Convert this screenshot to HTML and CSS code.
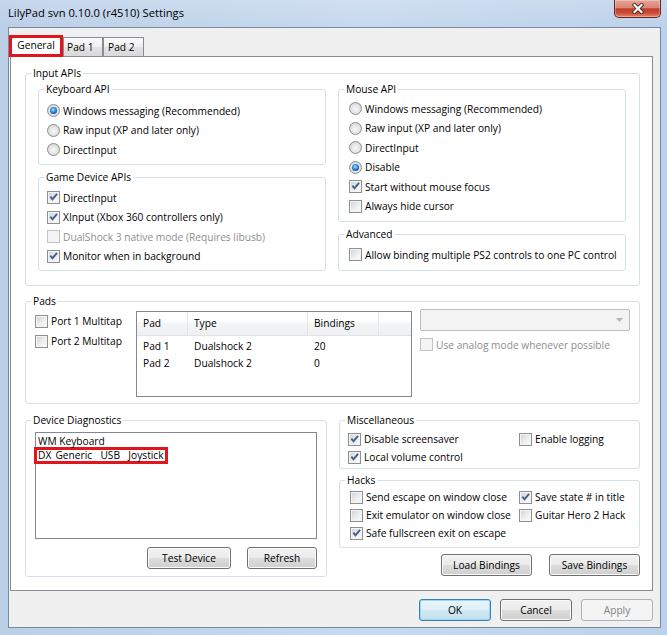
FILE: index.html
```html
<!DOCTYPE html>
<html lang="en">
<head>
    <meta charset="UTF-8">
    <meta name="viewport" content="width=device-width, initial-scale=1.0">
    <title>LilyPad svn 0.10.0 (r4510) Settings</title>
    <link rel="stylesheet" href="styles.css">
</head>
<body>
    <div class="window">
        <div class="titlebar">
            <span class="title">LilyPad svn 0.10.0 (r4510) Settings</span>
            <div class="close-button">
                <svg width="12" height="11" viewBox="0 0 12 11">
                    <path d="M2.5 2 L9.5 9 M9.5 2 L2.5 9" stroke="#4a2a25" stroke-width="4" stroke-linecap="square" fill="none"/>
                    <path d="M2.5 2 L9.5 9 M9.5 2 L2.5 9" stroke="#fff" stroke-width="2.2" stroke-linecap="square" fill="none"/>
                </svg>
            </div>
        </div>

        <div class="client">
            <!-- Tab strip -->
            <div class="tabs">
                <div class="tab selected">General</div>
                <div class="tab pad1">Pad 1</div>
                <div class="tab pad2">Pad 2</div>
            </div>

            <div class="tab-page">
                <!-- Input APIs -->
                <fieldset class="group input-apis">
                    <legend>Input APIs</legend>
                    <div class="input-body">
                        <div class="api-col">
                            <fieldset class="group keyboard">
                                <legend>Keyboard API</legend>
                                <div class="options left-opts pt5">
                                    <div class="option"><span class="radio on"></span>Windows messaging (Recommended)</div>
                                    <div class="option"><span class="radio"></span>Raw input (XP and later only)</div>
                                    <div class="option"><span class="radio"></span>DirectInput</div>
                                </div>
                            </fieldset>
                            <fieldset class="group game">
                                <legend>Game Device APIs</legend>
                                <div class="options left-opts pt4">
                                    <div class="option"><span class="check"><svg viewBox="0 0 11 11"><polygon points="1.6,5.2 3.1,4 4.4,5.7 8.4,1.2 9.8,2.5 4.5,8.8"/></svg></span>DirectInput</div>
                                    <div class="option"><span class="check"><svg viewBox="0 0 11 11"><polygon points="1.6,5.2 3.1,4 4.4,5.7 8.4,1.2 9.8,2.5 4.5,8.8"/></svg></span>XInput (Xbox 360 controllers only)</div>
                                    <div class="option disabled"><span class="check"></span>DualShock 3 native mode (Requires libusb)</div>
                                    <div class="option"><span class="check"><svg viewBox="0 0 11 11"><polygon points="1.6,5.2 3.1,4 4.4,5.7 8.4,1.2 9.8,2.5 4.5,8.8"/></svg></span>Monitor when in background</div>
                                </div>
                            </fieldset>
                        </div>
                        <div class="api-col">
                            <fieldset class="group mouse">
                                <legend>Mouse API</legend>
                                <div class="options right-opts pt3">
                                    <div class="option"><span class="radio"></span>Windows messaging (Recommended)</div>
                                    <div class="option"><span class="radio"></span>Raw input (XP and later only)</div>
                                    <div class="option"><span class="radio"></span>DirectInput</div>
                                    <div class="option"><span class="radio on"></span>Disable</div>
                                    <div class="option"><span class="check"><svg viewBox="0 0 11 11"><polygon points="1.6,5.2 3.1,4 4.4,5.7 8.4,1.2 9.8,2.5 4.5,8.8"/></svg></span>Start without mouse focus</div>
                                    <div class="option"><span class="check"></span>Always hide cursor</div>
                                </div>
                            </fieldset>
                            <fieldset class="group advanced">
                                <legend>Advanced</legend>
                                <div class="options right-opts pt4">
                                    <div class="option"><span class="check"></span>Allow binding multiple PS2 controls to one PC control</div>
                                </div>
                            </fieldset>
                        </div>
                    </div>
                </fieldset>

                <!-- Pads -->
                <fieldset class="group pads">
                    <legend>Pads</legend>
                    <div class="pads-body">
                        <div class="multitap">
                            <div class="option tall"><span class="check"></span>Port 1 Multitap</div>
                            <div class="option tall"><span class="check"></span>Port 2 Multitap</div>
                        </div>
                        <div class="listview">
                            <div class="lv-header">
                                <div class="lv-col c1">Pad</div>
                                <div class="lv-col c2">Type</div>
                                <div class="lv-col c3">Bindings</div>
                            </div>
                            <div class="lv-rows">
                                <div class="lv-row"><span class="c1">Pad 1</span><span class="c2">Dualshock 2</span><span class="c3">20</span></div>
                                <div class="lv-row"><span class="c1">Pad 2</span><span class="c2">Dualshock 2</span><span class="c3">0</span></div>
                            </div>
                        </div>
                        <div class="pad-options">
                            <div class="combo">
                                <svg width="7" height="4" viewBox="0 0 7 4"><polygon points="0,0 7,0 3.5,4" fill="#b4b4b4"/></svg>
                            </div>
                            <div class="option disabled analog"><span class="check"></span>Use analog mode whenever possible</div>
                        </div>
                    </div>
                </fieldset>

                <div class="bottom-row">
                    <!-- Device Diagnostics -->
                    <fieldset class="group diagnostics">
                        <legend>Device Diagnostics</legend>
                        <div class="diag-body">
                            <div class="listbox">
                                <div class="list-item">WM Keyboard</div>
                                <div class="list-item marked">DX Generic  USB  Joystick</div>
                            </div>
                            <div class="diag-buttons">
                                <button class="button test-device">Test Device</button>
                                <button class="button refresh">Refresh</button>
                            </div>
                        </div>
                    </fieldset>

                    <div class="side">
                        <fieldset class="group misc">
                            <legend>Miscellaneous</legend>
                            <div class="misc-body">
                                <div class="option short"><span class="check"><svg viewBox="0 0 11 11"><polygon points="1.6,5.2 3.1,4 4.4,5.7 8.4,1.2 9.8,2.5 4.5,8.8"/></svg></span>Disable screensaver</div>
                                <div class="option short"><span class="check"></span>Enable logging</div>
                                <div class="option short"><span class="check"><svg viewBox="0 0 11 11"><polygon points="1.6,5.2 3.1,4 4.4,5.7 8.4,1.2 9.8,2.5 4.5,8.8"/></svg></span>Local volume control</div>
                            </div>
                        </fieldset>
                        <fieldset class="group hacks">
                            <legend>Hacks</legend>
                            <div class="hacks-body">
                                <div class="option short"><span class="check"></span>Send escape on window close</div>
                                <div class="option short"><span class="check"><svg viewBox="0 0 11 11"><polygon points="1.6,5.2 3.1,4 4.4,5.7 8.4,1.2 9.8,2.5 4.5,8.8"/></svg></span>Save state # in title</div>
                                <div class="option short"><span class="check"></span>Exit emulator on window close</div>
                                <div class="option short"><span class="check"></span>Guitar Hero 2 Hack</div>
                                <div class="option short"><span class="check"><svg viewBox="0 0 11 11"><polygon points="1.6,5.2 3.1,4 4.4,5.7 8.4,1.2 9.8,2.5 4.5,8.8"/></svg></span>Safe fullscreen exit on escape</div>
                            </div>
                        </fieldset>
                        <div class="bindings-buttons">
                            <button class="button bindings">Load Bindings</button>
                            <button class="button bindings">Save Bindings</button>
                        </div>
                    </div>
                </div>
            </div>

            <!-- OK / Cancel / Apply -->
            <div class="dialog-buttons">
                <button class="button dialog default">OK</button>
                <button class="button dialog">Cancel</button>
                <button class="button dialog" disabled>Apply</button>
            </div>
        </div>
    </div>
</body>
</html>
```

FILE: styles.css
```css
/* LilyPad settings dialog, Windows 7 look */
body {
    font-family: "Open Sans", "Noto Sans", sans-serif;
    font-size: 10.2px;
    color: #000;
    margin: 0;
    padding: 0;
}

.window {
    width: 667px;
    height: 635px;
    box-sizing: border-box;
    padding: 0 6px 7px 8px;
    display: flex;
    flex-direction: column;
    background:
        linear-gradient(to bottom, rgba(255, 255, 255, 0.18), rgba(255, 255, 255, 0) 27px),
        linear-gradient(to right, #bbcfe7, #c7d9ee 55%, #bcd1ea);
}

/* Title bar */
.titlebar {
    flex: none;
    height: 27px;
    display: flex;
    justify-content: space-between;
    align-items: flex-start;
}

.title {
    font-size: 11.2px;
    line-height: 26px;
    color: #000;
}

.close-button {
    width: 47px;
    height: 18px;
    box-sizing: border-box;
    border: 1px solid #5e2820;
    border-top: none;
    border-radius: 0 0 5px 5px;
    background: linear-gradient(#e7a596 0%, #d98676 45%, #c43c2b 52%, #c94a36 75%, #e3876f 100%);
    box-shadow: inset 0 0 0 1px rgba(255, 255, 255, 0.3);
    display: flex;
    align-items: center;
    justify-content: center;
}

/* Client area */
.client {
    flex: 1;
    background-color: #f0f0f0;
    border: 1px solid #7a899e;
    padding: 7px 7px 6px 1px;
    display: flex;
    flex-direction: column;
}

/* Tabs */
.tabs {
    display: flex;
    align-items: flex-end;
    height: 21px;
    margin-left: -1px;
    position: relative;
    z-index: 1;
}

.tab {
    height: 19px;
    box-sizing: border-box;
    border: 1px solid #898c95;
    border-bottom: none;
    background: linear-gradient(#fafafa 0%, #f0f0f0 50%, #e3e3e3 51%, #d9d9d9 100%);
    line-height: 18px;
}

.tab.pad1 {
    width: 40px;
    padding-left: 3px;
}

.tab.pad2 {
    width: 41px;
    padding-left: 4px;
}

.tab.selected {
    width: 54px;
    height: 22px;
    margin-bottom: -1px;
    border: 3px solid #e3141b;
    background: #fff;
    text-align: center;
    line-height: 15px;
}

.tab-page {
    height: 535px;
    box-sizing: border-box;
    border: 1px solid #898c95;
    background-color: #fff;
    padding: 9px 12px 0 14px;
}

/* Group boxes */
.group {
    margin: 0;
    padding: 0;
    min-width: 0;
    box-sizing: border-box;
    border: 1px solid #d5dfe5;
    border-radius: 3px;
}

.group legend {
    padding: 0 2px;
    margin-left: 5px;
    line-height: 14px;
}

.input-apis {
    height: 220px;
}

.input-body {
    display: grid;
    grid-template-columns: 288px 288px;
    column-gap: 12px;
    padding: 2px 0 0 12px;
}

.api-col {
    display: flex;
    flex-direction: column;
    gap: 5px;
}

.keyboard { height: 83px; }
.game { height: 101px; }
.mouse { height: 140px; }
.advanced { height: 44px; }

.left-opts { padding-left: 8px; }
.right-opts { padding-left: 10px; }
.pt3 { padding-top: 3px; }
.pt4 { padding-top: 4px; }
.pt5 { padding-top: 5px; }

/* Check boxes and radio buttons */
.option {
    display: flex;
    align-items: center;
    height: 19.5px;
    white-space: nowrap;
}

.option.tall { height: 20px; }
.option.short { height: 18px; }

.option.disabled {
    color: #8e8e8e;
}

.check,
.radio {
    flex: none;
    width: 13px;
    height: 13px;
    box-sizing: border-box;
    margin-right: 3px;
    display: flex;
    align-items: center;
    justify-content: center;
}

.check {
    border: 1px solid #8e8f8f;
    background: linear-gradient(135deg, #cdd1d6 0%, #eceeef 55%, #fbfbfb 100%);
    box-shadow: inset 0 0 0 1px #f4f4f4;
}

.check svg {
    width: 11px;
    height: 11px;
    fill: #4a5e8c;
}

.option.disabled .check {
    border-color: #c3c3c3;
    background: #f4f4f4;
    box-shadow: none;
}

.radio {
    border: 1px solid #8b8d8f;
    border-radius: 50%;
    background: radial-gradient(circle at 50% 55%, #f8f8f8 0%, #e6e6e6 45%, #c9cacb 100%);
}

.radio.on::after {
    content: '';
    width: 7px;
    height: 7px;
    border-radius: 50%;
    background: radial-gradient(circle at 45% 40%, #b8e6ff 0%, #3e9ae4 35%, #134d92 75%, #0d3668 100%);
}

/* Pads */
.pads {
    height: 110px;
    margin-top: 8px;
}

.pads-body {
    display: flex;
    align-items: flex-start;
    padding-left: 9px;
}

.multitap {
    width: 101px;
    margin-top: 3px;
}

.listview {
    width: 276px;
    height: 86px;
    box-sizing: border-box;
    margin-top: 3px;
    border: 1px solid #828790;
}

.lv-header {
    display: flex;
    height: 24px;
    box-sizing: border-box;
    border-bottom: 1px solid #e2e3e5;
    background: linear-gradient(#ffffff 0%, #ffffff 45%, #f4f5f6 46%, #eff0f2 100%);
}

.lv-col {
    box-sizing: border-box;
    border-right: 1px solid #e3e4e6;
    padding-left: 6px;
    line-height: 23px;
}

.c1 { width: 51px; }
.c2 { width: 120px; }
.c3 { width: 71px; }

.lv-rows {
    padding-top: 2px;
}

.lv-row {
    display: flex;
    height: 17px;
    line-height: 17px;
}

.lv-row span {
    box-sizing: border-box;
    padding-left: 6px;
}

.pad-options {
    width: 210px;
    margin-left: 8px;
    margin-top: 1px;
}

.combo {
    height: 22px;
    box-sizing: border-box;
    border: 1px solid #babdc0;
    border-radius: 2px;
    background-color: #f3f3f3;
    display: flex;
    align-items: center;
    justify-content: flex-end;
    padding-right: 6px;
}

.analog {
    margin-top: 4px;
}

/* Bottom row */
.bottom-row {
    display: grid;
    grid-template-columns: 302px 301px;
    column-gap: 12px;
    align-items: start;
    margin-top: 9px;
}

.diagnostics {
    height: 164px;
}

.diag-body {
    padding: 5px 9px 0 9px;
}

.listbox {
    height: 107px;
    box-sizing: border-box;
    border: 1px solid #828790;
    padding-top: 1px;
    background-color: #fff;
}

.list-item {
    line-height: 14px;
    padding-left: 2px;
    white-space: pre;
}

.list-item.marked {
    width: fit-content;
    border: 3px solid #e3141b;
    line-height: 11px;
    margin: -1px 0 0 -2px;
    padding: 0 1px;
    word-spacing: 1.5px;
}

.diag-buttons {
    display: flex;
    justify-content: flex-end;
    gap: 16px;
    margin-top: 8px;
}

.side {
    display: flex;
    flex-direction: column;
}

.misc {
    height: 56px;
}

.misc-body {
    display: grid;
    grid-template-columns: 171px auto;
    padding: 3px 0 0 8px;
}

.hacks {
    height: 75px;
    margin-top: 4px;
}

.hacks-body {
    display: grid;
    grid-template-columns: 169px auto;
    padding: 1px 0 0 10px;
}

.bindings-buttons {
    display: flex;
    justify-content: flex-end;
    gap: 17px;
    margin-top: 6px;
}

/* Push buttons */
.button {
    height: 22px;
    box-sizing: border-box;
    padding: 0;
    font: inherit;
    color: #000;
    border: 1px solid #707070;
    border-radius: 3px;
    background: linear-gradient(#f2f2f2 0%, #ebebeb 49%, #dddddd 50%, #cfcfcf 100%);
    box-shadow: inset 0 0 0 1px #fbfbfb;
}

.test-device { width: 84px; }
.refresh { width: 70px; }
.bindings { width: 91px; }

.dialog-buttons {
    display: flex;
    justify-content: flex-end;
    gap: 9px;
    margin-top: 8px;
}

.button.dialog {
    width: 72px;
}

.button.default {
    border-color: #3c7fb1;
    background: linear-gradient(#eaf5fb 0%, #e0eef7 49%, #d2e7f3 50%, #c6dfee 100%);
    box-shadow: inset 0 0 0 1px #94dbf7;
}

.button:disabled {
    color: #838383;
    border-color: #adb2b5;
    background: #f4f4f4;
    box-shadow: none;
}
```
